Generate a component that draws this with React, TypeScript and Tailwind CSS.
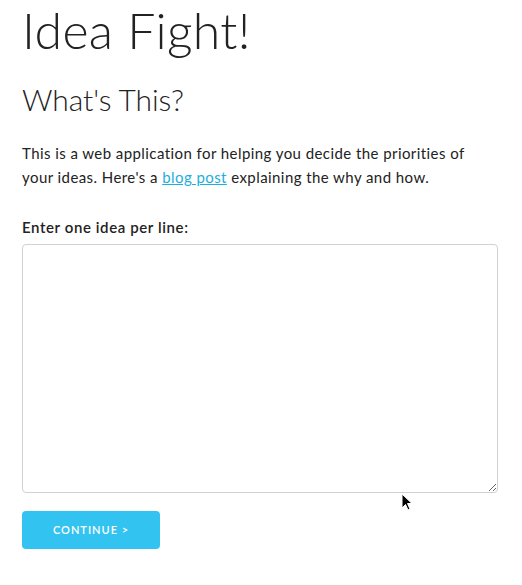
export default function App() {
  return (
    <div
      className="relative min-h-[585px] bg-white text-[#222222]"
      style={{ fontFamily: '"Lato", "Open Sans", sans-serif' }}
    >
      <div className="w-[476px] ml-[22px]">
        <h1 className="text-[50px] font-light leading-[60px] tracking-[0.3px]">
          Idea Fight!
        </h1>
        <h2 className="mt-[20px] text-[30px] font-light leading-[38px] tracking-[-0.1px]">
          What's This?
        </h2>
        <p className="mt-[23px] w-[462px] text-[15px] leading-[24px] tracking-[0.43px]">
          This is a web application for helping you decide the priorities of
          your ideas. Here's a{" "}
          <a href="#" className="text-[#1EAEDB] underline">
            blog post
          </a>{" "}
          explaining the why and how.
        </p>
        <label className="block mt-[26px] mb-[5px] text-[15px] font-semibold leading-[24px] tracking-[0.6px]">
          Enter one idea per line:
        </label>
        <textarea className="block w-[476px] h-[249px] border border-[#D1D1D1] rounded-[4px] bg-white px-[10px] py-[6px] outline-none" />
        <button className="mt-[18px] h-[38px] w-[138px] rounded-[4px] bg-[#33C3F0] text-[11px] font-semibold uppercase tracking-[1px] text-white">
          Continue &gt;
        </button>
      </div>
      <svg
        className="absolute left-[401px] top-[493px]"
        width="12"
        height="19"
        viewBox="0 0 12 19"
      >
        <path
          d="M1 1 L1 15 L4.5 11.5 L7 17 L9 16 L6.5 10.5 L11 10.5 Z"
          fill="#000"
          stroke="#fff"
          strokeWidth="1"
        />
      </svg>
    </div>
  );
}
